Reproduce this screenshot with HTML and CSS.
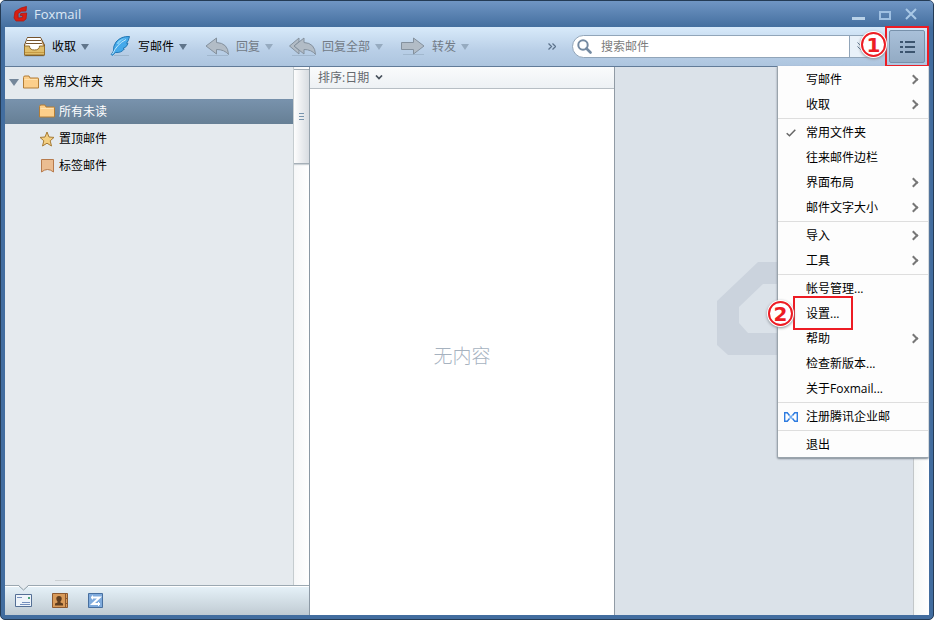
FILE: index.html
```html
<!DOCTYPE html>
<html lang="zh-CN">
<head>
<meta charset="utf-8">
<title>Foxmail</title>
<link rel="stylesheet" href="styles.css">
</head>
<body>
<div class="window">
  <header class="titlebar">
    <svg class="logo" width="16" height="16" viewBox="0 0 16 16"><path d="M13.5 0.5 L8 2 L2 5.5 L1 12 L3 15 L10.5 15 L13 13 L13.7 7 L7.8 7.5 L7.2 9.5 L9.8 9.5 L9.4 11.6 L5.2 12 L5 7.6 L8.5 5.2 L13 5Z" fill="#d81e12" stroke="#b3160c" stroke-width=".8"/></svg>
    <h1 class="title">Foxmail</h1>
    <div class="window-controls">
      <button type="button" aria-label="最小化"><svg width="13" height="12" viewBox="0 0 13 12"><path d="M0 9h13v3H0z" fill="#b9d2e8"/></svg></button>
      <button type="button" aria-label="最大化"><svg width="12" height="12" viewBox="0 0 12 12"><path d="M1 4h10v7H1z" fill="none" stroke="#9fc0e2" stroke-width="2"/></svg></button>
      <button type="button" aria-label="关闭"><svg width="12" height="12" viewBox="0 0 12 12"><path d="M1 1l10 10M11 1L1 11" fill="none" stroke="#a9c8e6" stroke-width="2"/></svg></button>
    </div>
  </header>

  <div class="toolbar">
    <button type="button" class="tool">
      <svg width="28" height="24" viewBox="0 0 28 24"><path d="M6 21.500h20" stroke="#94a9bd" opacity=".5"/><path d="M9.500 2.500h13L26.500 10v9.500q0 1-1 1h-18q-1 0-1-1V10z" fill="#c5924b" stroke="#70502a"/><path d="M9.500 3h13l2.500 8-5 4h-8l-5-4z" fill="#fff"/><path d="M9.500 2.500h13M9 5.500h14M8 8.500h16" stroke="#75532d" fill="none"/><path d="M6.500 11h5q0 4 5 4t5-4h5v9h-20z" fill="#dfbd6a" stroke="#94702f"/><path d="M7 17.500h19" stroke="#c69a44"/></svg>
      <span>收取</span><svg class="caret" width="8" height="6" viewBox="0 0 8 6"><path d="M0 0h8L4 6z"/></svg>
    </button>
    <button type="button" class="tool">
      <svg width="28" height="24" viewBox="0 0 28 24"><path d="M10 20.500h15" stroke="#92a9bd" opacity=".6"/><path d="M25.500 1.500Q17 1 12 7q-3 4-2.500 9l-2.200 3.500 1 1 3-3q6 .5 9-3.500l-1.300-.5q4-1.500 5-5l-1.500-.2q2-2 3-6.800z" fill="#45a9ea" stroke="#2478b4"/><path d="M22 4.500Q13 9 8.500 19" stroke="#c3e9fc" fill="none"/><path d="M12.500 9q2-5 10-6-5.500 1.500-8 6z" fill="#83d2f8"/></svg>
      <span>写邮件</span><svg class="caret" width="8" height="6" viewBox="0 0 8 6"><path d="M0 0h8L4 6z"/></svg>
    </button>
    <button type="button" class="tool" disabled>
      <svg width="28" height="24" viewBox="0 0 28 24"><path d="M5 20.500h21" stroke="#8499ae" opacity=".4"/><path d="M4 11L14.500 3v4.500Q26 8 26.500 19.500q-4-5-12-5V19z" fill="#b2bcc6" stroke="#84919e"/></svg>
      <span>回复</span><svg class="caret" width="8" height="6" viewBox="0 0 8 6"><path d="M0 0h8L4 6z"/></svg>
    </button>
    <button type="button" class="tool" disabled>
      <svg width="28" height="24" viewBox="0 0 28 24"><path d="M4 20.500h23" stroke="#8499ae" opacity=".4"/><path d="M1.500 11L11 3v4l-5 4 5 4v4z" fill="#b2bcc6" stroke="#84919e"/><path d="M6 11L16 3v4.500Q27 8 27.500 19.500q-4-5-11.500-5V19z" fill="#b2bcc6" stroke="#84919e"/></svg>
      <span>回复全部</span><svg class="caret" width="8" height="6" viewBox="0 0 8 6"><path d="M0 0h8L4 6z"/></svg>
    </button>
    <button type="button" class="tool" disabled>
      <svg width="28" height="24" viewBox="0 0 28 24"><path d="M5 19.500h21" stroke="#8499ae" opacity=".4"/><path d="M3.500 7.500h12V3l10.500 8-10.500 8v-4.500h-12z" fill="#b2bcc6" stroke="#84919e"/></svg>
      <span>转发</span><svg class="caret" width="8" height="6" viewBox="0 0 8 6"><path d="M0 0h8L4 6z"/></svg>
    </button>
    <button type="button" class="overflow" aria-label="更多"><svg width="8" height="7" viewBox="0 0 8 7"><path d="M.5.500l3 3-3 3M4.500.500l3 3-3 3" fill="none" stroke="#5c738c" stroke-width="1.300"/></svg></button>
    <form class="search" role="search">
      <label class="search-icon" for="q" aria-label="搜索邮件"><svg width="15" height="15" viewBox="0 0 15 15"><circle cx="6" cy="6" r="4.700" fill="none" stroke="#7389a1" stroke-width="2"/><path d="M9.500 9.500l4 4" stroke="#7389a1" stroke-width="2.600" stroke-linecap="round"/></svg></label>
      <input id="q" type="search" placeholder="搜索邮件">
      <button type="button" class="search-more" aria-label="搜索选项"><svg width="7" height="9" viewBox="0 0 7 9"><path d="M.5.500l3 3 3-3M.5 4.500l3 3 3-3" fill="none" stroke="#5c738c"/></svg></button>
    </form>
    <div class="menu-anchor">
      <button type="button" class="menu-button" aria-label="主菜单" aria-expanded="true"><svg width="15" height="12" viewBox="0 0 15 12"><path d="M0 0h3v2H0zM5 0h10v2H5zM0 5h3v2H0zM5 5h10v2H5zM0 10h3v2H0zM5 10h10v2H5z" fill="#3c556f"/></svg></button>
      <span class="step step-one">1</span>
    </div>

    <nav class="menu" aria-label="主菜单">
      <button type="button" class="item sub">写邮件</button>
      <button type="button" class="item sub">收取</button>
      <hr>
      <button type="button" class="item"><svg class="mark" width="10" height="8" viewBox="0 0 10 8"><path d="M.7 4.200l2.800 2.600L9.300.700" fill="none" stroke="#666" stroke-width="1.500"/></svg>常用文件夹</button>
      <button type="button" class="item">往来邮件边栏</button>
      <button type="button" class="item sub">界面布局</button>
      <button type="button" class="item sub">邮件文字大小</button>
      <hr>
      <button type="button" class="item sub">导入</button>
      <button type="button" class="item sub">工具</button>
      <hr>
      <button type="button" class="item">帐号管理...</button>
      <button type="button" class="item marked">设置...<span class="step step-two">2</span></button>
      <button type="button" class="item sub">帮助</button>
      <button type="button" class="item">检查新版本...</button>
      <button type="button" class="item">关于Foxmail...</button>
      <hr>
      <button type="button" class="item"><svg class="mark" width="14" height="10" viewBox="0 0 14 10"><path d="M5.500 6.500L3.300 9.300H.7V.7h2.600L5.500 3.500M8.500 3.500L10.700.7h2.600v8.600h-2.600L8.500 6.500" fill="none" stroke="#2e7ce0" stroke-width="1.400"/><path d="M5 3l3.800 4.200M5.500 6.500L8.700 3" fill="none" stroke="#74aef2" stroke-width="1.400"/></svg>注册腾讯企业邮</button>
      <hr>
      <button type="button" class="item">退出</button>
    </nav>
  </div>

  <main class="panes">
    <aside class="sidebar">
      <div class="tree-area">
        <ul class="tree">
          <li class="root"><svg width="10" height="7" viewBox="0 0 10 7"><path d="M0 0h10L5 7z" fill="#74879a"/></svg><svg class="folder" width="16" height="14" viewBox="0 0 16 14"><path d="M.5 13V2.500q0-1.500 1.500-1.500h4l1 2h8q.5 0 .5.500V13z" fill="#fccf8b" stroke="#b27d37"/><path d="M1.500 4.500h13" stroke="#ffe3b0"/></svg><span>常用文件夹</span></li>
          <li class="leaf selected"><svg width="16" height="16" viewBox="0 0 16 16"><path d="M.5 13V2.500q0-1.500 1.500-1.500h4l1 2h8q.5 0 .5.500V13z" fill="#fccf8b" stroke="#b27d37"/><path d="M1.500 4.500h13" stroke="#ffe3b0"/></svg><span>所有未读</span></li>
          <li class="leaf"><svg width="16" height="16" viewBox="0 0 16 16"><path d="M8 1l2 5 5 .4-3.800 3.400 1.300 5.200L8 12.200 3.500 15l1.300-5.200L1 6.400 6 6z" fill="#f3cf82" stroke="#a67b35"/></svg><span>置顶邮件</span></li>
          <li class="leaf"><svg width="16" height="16" viewBox="0 0 16 16"><path d="M2.500 1.500h12v12.500q-3-2.500-6-2.500t-6 2.500z" fill="#ebbd91" stroke="#b77b4d"/></svg><span>标签邮件</span></li>
        </ul>
        <div class="scrollbar"><div class="thumb"><i></i><i></i><i></i></div></div>
        <span class="resize-hint"></span>
      </div>
      <nav class="modules">
        <svg class="notch" width="11" height="6" viewBox="0 0 11 6"><path d="M.5 0h10L5.500 5z" fill="#e5eaee"/><path d="M.5.500l5 4.500 5-4.500" fill="none" stroke="#8d9ba4"/></svg>
        <button type="button" aria-label="邮件"><svg width="18" height="16" viewBox="0 0 18 16"><path d="M.5 1.500h16v12H.5z" fill="#eef4fa" stroke="#546f95"/><path d="M2 4.500h5M7 9.500h8M5 11.500h10" stroke="#7590be"/><path d="M13 4h2v2h-2z" fill="#4aa479"/></svg></button>
        <button type="button" aria-label="地址簿"><svg width="18" height="16" viewBox="0 0 18 16"><path d="M1.500.500h15v14h-15z" fill="#d99b5a" stroke="#8c5930"/><path d="M14.500 1v13M15 5.500h2M15 10.500h2" stroke="#8c5930"/><path d="M8 3q2.700 0 2.700 2.700Q10.700 7.500 9.500 8.500v1l2.500 1v2H4v-2l2.500-1v-1Q5.300 7.500 5.300 5.700 5.300 3 8 3z" fill="#603e20"/></svg></button>
        <button type="button" aria-label="同步"><svg width="18" height="16" viewBox="0 0 18 16"><path d="M1.500.500h14v14h-14z" fill="#7fabdd" stroke="#476f9f"/><path d="M4 4.500h8.500L5.500 11H13" fill="none" stroke="#fff" stroke-width="2"/><path d="M5.500 2.500v4M11.500 9v4" stroke="#fff"/></svg></button>
      </nav>
    </aside>

    <section class="messages">
      <button type="button" class="sort">排序:日期<svg width="8" height="5" viewBox="0 0 8 5"><path d="M1 .5l3 3 3-3" fill="none" stroke="#47515b" stroke-width="1.700"/></svg></button>
      <p class="empty">无内容</p>
    </section>

    <section class="preview">
      <div class="canvas"><svg class="watermark" width="156" height="94" viewBox="0 0 156 94"><path d="M41 0h75l40 39v44l-11 10H11L0 83V39z" fill="#cbd3dd"/><path d="M46 22h64l24 23v16l-9 10H31L22 61V45z" fill="#dbe2e9"/></svg></div>
      <div class="track"></div>
    </section>
  </main>
</div>
</body>
</html>
```
FILE: styles.css
```css
*, *::before, *::after { box-sizing: border-box; }

body {
  margin: 0;
  background: #fff;
  color: #000;
  font: 12px/18px "Open Sans", "Noto Sans CJK SC", sans-serif;
}

button, input { font: inherit; color: inherit; }

button {
  display: flex;
  align-items: center;
  padding: 0;
  border: 0;
  background: none;
}

svg { display: block; flex: none; }

.window {
  display: flex;
  flex-direction: column;
  height: 100vh;
  min-height: 500px;
  padding: 0 4px 4px;
  border: 1px solid #243b55;
  border-radius: 5px;
  background: #426d9f;
}

/* Title bar */
.titlebar {
  display: flex;
  align-items: center;
  flex: none;
  height: 26px;
  margin: 0 -4px;
  padding: 0 16px 0 12px;
  border-radius: 4px 4px 0 0;
  background: linear-gradient(#7096c4, #446f9f);
}

.title {
  margin: 0 auto 0 5px;
  color: #dce8f5;
  font-size: 13px;
  font-weight: 400;
}

.window-controls { display: flex; gap: 14px; }

/* Toolbar */
.toolbar {
  position: relative;
  display: flex;
  align-items: center;
  flex: none;
  height: 40px;
  padding-left: 13px;
  border-bottom: 1px solid #617b98;
  background: linear-gradient(#d8eafa, #b9cfe7 60%, #adc5df);
}

.tool { flex: none; margin-right: 15px; }
.tool span { margin: 0 5px 0 6px; }
.tool:disabled { color: #727b86; }
.caret { fill: #60758b; }
.tool:disabled .caret { fill: #96abc0; }
.overflow { flex: none; margin: 0 16px 0 auto; }

.search {
  display: flex;
  flex: 0 1 312px;
  height: 23px;
  overflow: hidden;
  border: 1px solid #91a5b9;
  border-radius: 12px;
  background: #fff;
}

.search-icon { padding: 3px 0 0 4px; }

.search input {
  flex: 1;
  min-width: 0;
  padding: 0 9px;
  border: 0;
  outline: 0;
  background: none;
}

.search input::placeholder { color: #7c7c7c; opacity: 1; }

.search-more {
  justify-content: center;
  width: 34px;
  padding-right: 12px;
  border-left: 1px solid #91a5b9;
  background: #e9f1f9;
}

.menu-anchor {
  position: relative;
  display: flex;
  flex: none;
  margin-left: 1px;
  padding: 2px;
  border: 2px solid #ed1c24;
}

.menu-button {
  justify-content: center;
  width: 36px;
  height: 33px;
  border: 1px solid #7891ab;
  border-radius: 2px;
  background: linear-gradient(#a9c0d9, #93abc4);
}

/* Numbered callouts */
.step {
  position: absolute;
  display: flex;
  align-items: center;
  justify-content: center;
  width: 25px;
  height: 25px;
  border: 2px solid #ed1c24;
  border-radius: 50%;
  background: #fff;
  box-shadow: 0 0 0 1px #fff, 0 1px 3px 1px #8a8f96;
  color: #ed1c24;
  font: bold 20px/20px "DejaVu Sans", sans-serif;
}

.step-one { top: 4px; left: -26px; }

/* Main menu */
.menu {
  position: absolute;
  z-index: 2;
  top: 100%;
  right: 0;
  min-width: 152px;
  padding-top: 1px;
  border: 1px solid #9aa4ac;
  border-top: 0;
  border-right-color: #d4dadf;
  border-radius: 0 0 2px 2px;
  background: #fdfdfd;
  box-shadow: 0 1px 2px #808a94;
}

.menu hr {
  height: 1px;
  margin: 1px 0;
  border: 0;
  background: #dedede;
}

.item {
  position: relative;
  width: 100%;
  height: 25px;
  padding: 0 28px;
  white-space: nowrap;
}

.sub::after {
  content: "";
  position: absolute;
  right: 11px;
  width: 7px;
  height: 7px;
  border: solid #777;
  border-width: 2px 2px 0 0;
  transform: rotate(45deg);
}

.mark {
  position: absolute;
  left: 13px;
  transform: translateX(-50%);
}

.marked::before {
  content: "";
  position: absolute;
  inset: -5px auto -4px 15px;
  width: 60px;
  border: 2px solid #ed1c24;
}

.step-two { top: 0; left: -10px; }

/* Panes */
.panes {
  display: grid;
  grid-template-columns: 305px 305px 1fr;
  flex: 1;
  min-height: 0;
}

.sidebar {
  display: flex;
  flex-direction: column;
  border-right: 1px solid #8c99a5;
  background: #e5eaee;
}

.tree-area { position: relative; display: flex; flex: 1; }

.tree {
  display: flex;
  flex: 1;
  flex-direction: column;
  gap: 2px;
  margin: 0;
  padding: 0;
  list-style: none;
}

.tree li { display: flex; align-items: center; }
.root { height: 30px; padding-left: 4px; }
.root .folder { margin: 0 4px; }
.leaf { gap: 4px; height: 25px; padding-left: 34px; }

.selected {
  border-top: 1px solid #7690aa;
  background: linear-gradient(#7892ac, #667f95);
  color: #fff;
}

.scrollbar {
  width: 16px;
  padding-top: 2px;
  border-left: 1px solid #c5cccf;
  background: linear-gradient(90deg, #f6f7f8, #fff);
}

.thumb {
  display: flex;
  flex-direction: column;
  align-items: center;
  justify-content: center;
  gap: 2px;
  height: 95px;
  border: 1px solid #a5afb7;
  border-width: 1px 0;
  background: linear-gradient(90deg, #fdfdfd, #d8dce1);
  box-shadow: 0 1px 1px #ccd2d7;
}

.thumb i { width: 5px; height: 1px; background: #7894ad; }

.resize-hint {
  position: absolute;
  bottom: 4px;
  left: 50px;
  width: 15px;
  height: 1px;
  background: #cbd0d3;
}

.modules {
  position: relative;
  display: flex;
  align-items: center;
  flex: none;
  gap: 18px;
  height: 30px;
  padding-left: 10px;
  border-top: 1px solid #9ba8b1;
  background: linear-gradient(#e6f2f9, #c0cbd3);
  box-shadow: inset 0 1px #fff;
}

.notch { position: absolute; top: -1px; left: 13px; }

.messages {
  display: flex;
  flex-direction: column;
  border-right: 1px solid #919ba5;
  background: #fff;
}

.sort {
  gap: 6px;
  height: 22px;
  padding-left: 8px;
  border-bottom: 1px solid #b7bec4;
  background: linear-gradient(#fafbfc, #edf1f4);
  color: #65696e;
}

.empty {
  display: grid;
  flex: 1;
  place-content: center;
  margin: 0;
  padding-top: 8px;
  color: #a6b2bf;
  font-size: 19px;
  font-weight: 300;
  line-height: 24px;
}

.preview { display: flex; background: #dbe2e9; }

.canvas {
  display: flex;
  flex: 1;
  align-items: center;
  justify-content: center;
  padding: 0 0 64px 62px;
  overflow: hidden;
}

.track {
  width: 16px;
  border-left: 1px solid #c2c7c9;
  background: linear-gradient(90deg, #f4f7f6, #fff);
}
```
